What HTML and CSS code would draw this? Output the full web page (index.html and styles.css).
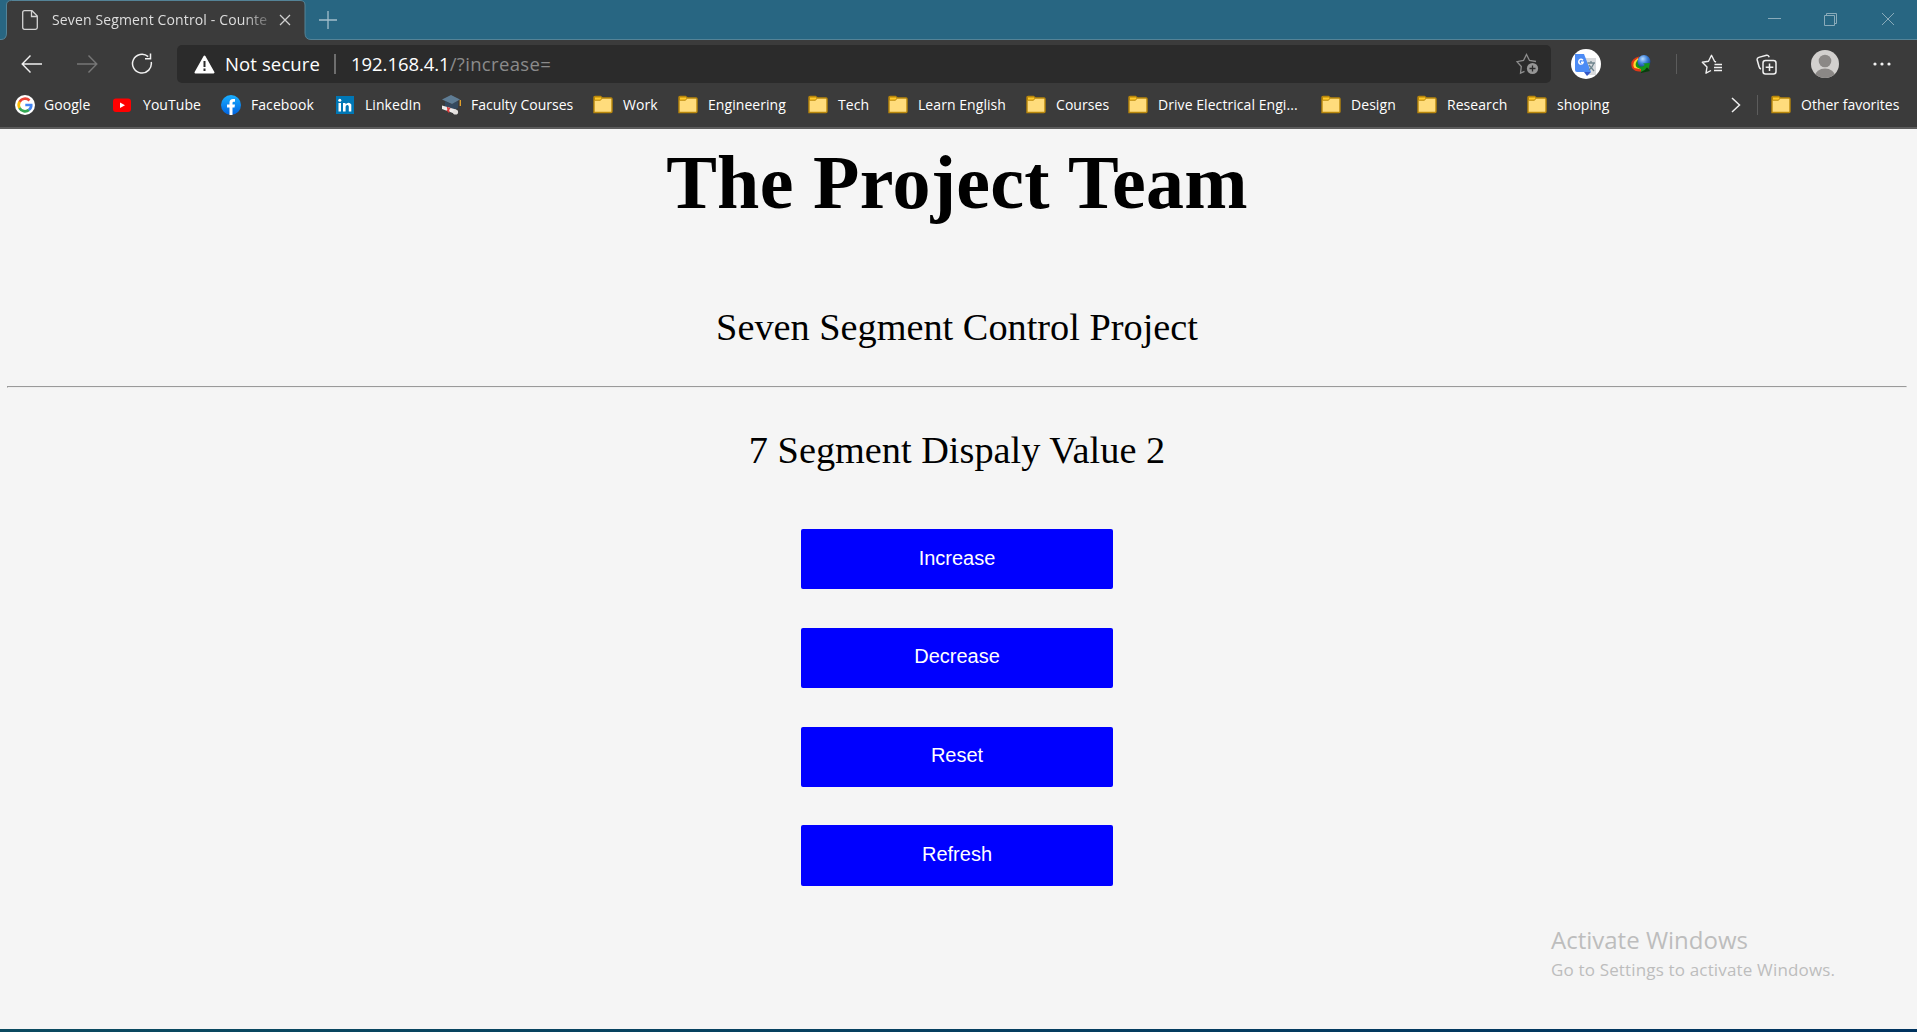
FILE: index.html
```html
<!DOCTYPE html>
<html lang="en">
<head>
<meta charset="utf-8">
<title>Seven Segment Control - Counter</title>
<link rel="stylesheet" href="styles.css">
</head>
<body>
<svg class="defs" width="0" height="0" aria-hidden="true">
  <linearGradient id="fb" x1="0" y1="0" x2="0" y2="1"><stop offset="0" stop-color="#19afff"/><stop offset="1" stop-color="#0062e0"/></linearGradient>
  <radialGradient id="globe" cx=".4" cy=".3" r=".7"><stop offset="0" stop-color="#b9dcff"/><stop offset=".5" stop-color="#3f83dc"/><stop offset="1" stop-color="#123a86"/></radialGradient>
  <symbol id="folder" viewBox="0 0 20 20">
    <path d="M1 17.5V2.5Q1 1.5 2 1.5H7.5L9.5 3H18Q19 3 19 4V16.500Q19 17.500 18 17.500Z" fill="#ffdc7c" stroke="#b8860b" stroke-width="1.4"/>
    <path d="M1.500 2H7.500L9 3.200L7.500 5.200H1.500Z" fill="#ffc928" stroke="#b8860b"/>
  </symbol>
</svg>
<header class="browser">
  <div class="titlebar">
    <div class="tab">
      <svg class="tab-shape" width="320" height="40"><path d="M0 39.500H1Q6.500 39.500 6.500 33V5Q6.500 .5 11.500 .5H300Q305 .5 305 5V33Q305 39.500 311 39.500H320V40H0Z" fill="#3b3b3b"/><path d="M0 39.500H1Q6.500 39.500 6.500 33V5Q6.500 .5 11.500 .5H300Q305 .5 305 5V33Q305 39.500 311 39.500H320" fill="none" stroke="#548397"/></svg>
      <svg class="tab-page" width="16" height="20" fill="none" stroke="#d4d4d4" stroke-width="1.300"><path d="M2.500.7H10L15.300 6V17.500Q15.300 19.300 13.500 19.300H2.500Q.7 19.300.7 17.500V2.500Q.7.7 2.500.7ZM9.500.7V6.500H15.300"/></svg>
      <span class="tab-title">Seven Segment Control - Counte</span>
      <svg class="tab-close" width="12" height="12" stroke="#d0d0d0" stroke-width="1.300"><path d="M1 1L11 11M11 1L1 11"/></svg>
    </div>
    <svg class="plus" width="18" height="18" stroke="#a3bfcc" stroke-width="1.300"><path d="M9 0V18M0 9H18"/></svg>
    <svg class="window-buttons" width="130" height="16" fill="none" stroke="#8aabba"><path d="M1 6.500H14M57.500 3.500H67.500V13.500H57.500ZM59.500 3.500V1.500H69.500V11.500H67.500M115 1L127 13M127 1L115 13"/></svg>
  </div>
  <div class="toolbar">
    <svg class="back" width="22" height="20" fill="none" stroke="#f0f0f0" stroke-width="1.400"><path d="M9.500 1.500L1.200 10L9.500 18.500M1 10H21"/></svg>
    <svg class="forward" width="22" height="20" fill="none" stroke="#777" stroke-width="1.400"><path d="M11.500 1.500L19.800 10L11.500 18.500M0 10H20"/></svg>
    <svg class="reload" width="22" height="22" fill="none" stroke="#f0f0f0" stroke-width="1.500"><path d="M17.200 3.600A9.400 9.400 0 1 0 20.200 9M19.500.5V5.700H14"/></svg>
    <div class="address">
      <svg width="21" height="19"><path d="M10.500 1.500L19.500 17.500H1.500Z" fill="#fff" stroke="#fff" stroke-width="2" stroke-linejoin="round"/><path d="M10.500 6V12M10.500 13.500V16" stroke="#2b2b2b" stroke-width="2"/></svg>
      <span class="secure">Not secure</span>
      <i class="address-line"></i>
      <span class="url">192.168.4.1<span class="path">/?increase=</span></span>
      <svg class="add-star" width="24" height="22" fill="none" stroke="#8d8d8d" stroke-width="1.300"><path d="M8.500 18.300L4.500 20.200L5.300 13.500L1 8.700L7.500 7.500L10.500 1.500L13.500 7.500L20 8.500"/><circle cx="16.500" cy="15.500" r="5.600" fill="#969696" stroke="none"/><path d="M16.500 12.500V18.500M13.500 15.500H19.500" stroke="#2b2b2b"/></svg>
    </div>
    <svg class="translate" width="32" height="32"><circle cx="16" cy="16" r="15" fill="#fff"/><path d="M13 10H26V27H18Z" fill="#d8dadd"/><path d="M5 6H14L21 24H7Q5 24 5 22Z" fill="#4c8bf5"/><path d="M14 24H21L17 28Z" fill="#3457c6"/><path d="M17.500 15H25M21 13V15M24 15Q22 20 19 22M19 17L24 23" fill="none" stroke="#70868e" stroke-width="1.300"/><path d="M13 12.300Q11 10.300 9.200 12.200Q8 14.500 10 16Q12.800 16.500 13.200 14.300H11" fill="none" stroke="#fff" stroke-width="1.400"/></svg>
    <svg class="idm" width="22" height="20"><path d="M9 2.500Q-1 5 2 14Q6 19 13 17L10 12Q5 13 8 7Z" fill="#e23816"/><path d="M8 4Q1 9 4.500 14L12 15.500L9 10Z" fill="#ffd62e"/><path d="M7.500 6Q3.500 12 8 14L12 13L9 8Z" fill="#14961b"/><circle cx="14" cy="7.500" r="6.500" fill="url(#globe)"/><path d="M8 12Q12 14 15 11L13 9.500L20 9L18.500 15L17 13.500Q15 17 11 18V15Q8 15 8 12Z" fill="#14961b"/><path d="M11 18Q15 17 17 13.500L20 17L11 19Z" fill="#073f0b"/></svg>
    <i class="tool-line"></i>
    <svg class="favorites" width="22" height="21" fill="none" stroke="#f0f0f0" stroke-width="1.400" stroke-linejoin="round"><path d="M10 16.500L5 19.200L6 13L1.300 8.300L7.500 7.300L10.500 1.300L13.500 7.300L15 8M13.500 10.500H21M13 13.500H21M13 16.500H21"/></svg>
    <svg class="collections" width="22" height="21" fill="none" stroke="#f0f0f0" stroke-width="1.500"><rect x="7" y="6.500" width="13" height="13.500" rx="2.500"/><path d="M13.500 9.500V17M9.700 13.200H17.300M5 15Q3.500 14.500 3 12.500L1.200 6Q.8 4 2.800 3.400L10.500 1.300Q12.500.8 13.200 3.200"/></svg>
    <svg class="profile" width="28" height="28"><defs><clipPath id="face"><circle cx="14" cy="14" r="14"/></clipPath></defs><g clip-path="url(#face)"><path d="M0 0H28V28H0Z" fill="#d2d0ce"/><circle cx="14" cy="11" r="6.300" fill="#8b8886"/><ellipse cx="14" cy="26" rx="10" ry="7.500" fill="#8b8886"/></g></svg>
    <svg class="more" width="18" height="4" fill="#f2f2f2"><circle cx="2" cy="2" r="1.600"/><circle cx="9" cy="2" r="1.600"/><circle cx="16" cy="2" r="1.600"/></svg>
  </div>
  <nav class="bookmarks">
    <a class="bm google"><svg width="20" height="20"><circle cx="10" cy="10" r="10" fill="#fff"/><g fill="none" stroke-width="2.700"><path d="M14.500 5.500A6.300 6.300 0 0 0 4.500 7" stroke="#ea4335"/><path d="M4.600 6.800A6.300 6.300 0 0 0 4.600 13.200" stroke="#fbbc05"/><path d="M4.500 13A6.300 6.300 0 0 0 14 14.900" stroke="#34a853"/><path d="M13.800 15Q16.500 13 16.200 10H10.300" stroke="#4285f4"/></g></svg><span>Google</span></a>
    <a class="bm youtube"><svg width="20" height="20"><rect x="0" y="3.500" width="18" height="13.500" rx="3" fill="#f00"/><path d="M7 7.500L12 10.200L7 13Z" fill="#fff"/></svg><span>YouTube</span></a>
    <a class="bm facebook"><svg width="20" height="20"><circle cx="10" cy="10" r="10" fill="url(#fb)"/><path d="M8.500 20V12.500H6V9.500H8.500V7.500Q8.500 4 12 4H14V6.700H12.700Q11.500 6.700 11.500 8V9.500H14L13.500 12.500H11.500V20Z" fill="#fff"/></svg><span>Facebook</span></a>
    <a class="bm linkedin"><svg width="20" height="20"><path d="M1 1H19V19H1Z" fill="#0077b5"/><path d="M3.500 8H6V16.500H3.500ZM8 8H10.500V9.200Q14 6 16.300 9.500V16.500H13.800V11.500Q13.500 9.500 12 10Q10.600 10.300 10.600 12V16.500H8Z" fill="#fff"/><circle cx="4.800" cy="5.200" r="1.500" fill="#fff"/></svg><span>LinkedIn</span></a>
    <a class="bm faculty"><svg width="20" height="20"><path d="M4 6L10 9L17 6V13Q10 16 4 12Z" fill="#34495e"/><path d="M1 4.500L10 0L19 4.500L11 9Z" fill="#5f7d95"/><path d="M19.300 5V11" stroke="#e9a52b" stroke-width="1.300"/><path d="M1 10.500L15 14.500L14.500 19L1 14Z" fill="#eeeceb"/><path d="M6.500 12L8 17.500M9 13L6 16" stroke="#df3b3b" stroke-width="1.500"/><circle cx="14.500" cy="17" r="2.600" fill="#e4e0de"/></svg><span>Faculty Courses</span></a>
    <a class="bm work"><svg width="20" height="20"><use href="#folder"/></svg><span>Work</span></a>
    <a class="bm engineering"><svg width="20" height="20"><use href="#folder"/></svg><span>Engineering</span></a>
    <a class="bm tech"><svg width="20" height="20"><use href="#folder"/></svg><span>Tech</span></a>
    <a class="bm english"><svg width="20" height="20"><use href="#folder"/></svg><span>Learn English</span></a>
    <a class="bm courses"><svg width="20" height="20"><use href="#folder"/></svg><span>Courses</span></a>
    <a class="bm drive"><svg width="20" height="20"><use href="#folder"/></svg><span>Drive Electrical Engi...</span></a>
    <a class="bm design"><svg width="20" height="20"><use href="#folder"/></svg><span>Design</span></a>
    <a class="bm research"><svg width="20" height="20"><use href="#folder"/></svg><span>Research</span></a>
    <a class="bm shoping"><svg width="20" height="20"><use href="#folder"/></svg><span>shoping</span></a>
    <svg class="chevron" width="10" height="16" fill="none" stroke="#eee" stroke-width="1.500"><path d="M1 1L8.500 8L1 15"/></svg>
    <i class="bm-line"></i>
    <a class="bm other"><svg width="20" height="20"><use href="#folder"/></svg><span>Other favorites</span></a>
  </nav>
</header>
<main class="page">
  <h1>The Project Team</h1>
  <p class="subtitle">Seven Segment Control Project</p>
  <hr>
  <p class="value">7 Segment Dispaly Value 2</p>
  <form class="controls">
    <button type="button">Increase</button>
    <button type="button">Decrease</button>
    <button type="button">Reset</button>
    <button type="button">Refresh</button>
  </form>
</main>
<aside class="activate"><div class="activate-title">Activate Windows</div><div class="activate-text">Go to Settings to activate Windows.</div></aside>
<footer class="taskbar"></footer>
</body>
</html>
```
FILE: styles.css
```css
* { box-sizing: border-box; }
body { margin: 0; height: 1032px; overflow: hidden; display: flex; flex-direction: column; background: #f5f5f5; font-family: "Open Sans", "Noto Sans", sans-serif; }
svg, i { display: block; flex: none; }
.defs { position: absolute; }
.browser { height: 129px; flex: none; background: #3b3b3b; border-bottom: 2px solid #5c5c5c; color: #fff; }
.titlebar { height: 40px; display: flex; align-items: center; background: #286682; border-bottom: 1px solid #548397; }
.tab { position: relative; width: 320px; height: 40px; flex: none; display: flex; align-items: center; padding-left: 22px; }
.tab-shape { position: absolute; left: 0; top: 0; }
.tab-page, .tab-title, .tab-close { position: relative; }
.tab-title { width: 217px; margin-left: 14px; font-size: 14px; letter-spacing: .13px; line-height: 20px; white-space: nowrap; color: #dedede; -webkit-mask-image: linear-gradient(90deg, #000 88%, transparent 104%); mask-image: linear-gradient(90deg, #000 88%, transparent 104%); }
.tab-close { margin-left: 10px; }
.plus { margin-left: -1px; }
.window-buttons { margin: 0 20px 0 auto; }
.toolbar { height: 48px; display: flex; align-items: center; }
.back { margin-left: 21px; }
.forward { margin-left: 34px; }
.reload { margin-left: 32px; }
.address { width: 1374px; height: 38px; margin-left: 24px; padding: 0 11px 0 17px; display: flex; align-items: center; border-radius: 5px; background: #2b2b2b; font-size: 18.500px; line-height: 24px; white-space: nowrap; }
.secure { width: 98px; margin-left: 10px; letter-spacing: .12px; }
.address-line { width: 2px; height: 20px; margin-left: 11px; background: #6e6e6e; }
.url { margin-left: 15px; letter-spacing: -.05px; }
.path { color: #8b8b8b; letter-spacing: .35px; }
.add-star { margin-left: auto; }
.translate { margin-left: 19px; }
.idm { margin-left: 28px; }
.tool-line { width: 1px; height: 20px; margin-left: 24px; background: #5c5c5c; }
.favorites { margin-left: 24px; }
.collections { margin-left: 33px; }
.profile { margin-left: 33px; }
.more { margin-left: 34px; }
.bookmarks { height: 34px; display: flex; align-items: center; padding-left: 15px; font-size: 14px; letter-spacing: .06px; line-height: 20px; }
.bm { display: flex; flex: none; gap: 10px; white-space: nowrap; }
.google { width: 98px; gap: 9px; }
.youtube { width: 108px; }
.facebook { width: 114px; }
.linkedin { width: 106px; }
.faculty { width: 152px; letter-spacing: 0; }
.work { width: 85px; }
.engineering { width: 130px; }
.tech { width: 80px; }
.english { width: 138px; }
.courses { width: 102px; }
.drive { width: 193px; }
.design { width: 96px; }
.research { width: 110px; }
.shoping { width: 204px; }
.bm-line { width: 1px; height: 20px; margin: 0 13px 0 16px; background: #5c5c5c; }
.other { letter-spacing: 0; }
.page { flex: 1; padding: 11px 10px 0 7px; display: flex; flex-direction: column; font-family: "Liberation Serif", serif; color: #000; text-align: center; }
h1 { margin: 0; font-size: 76px; letter-spacing: .3px; line-height: 84px; }
p { margin: 0; font-size: 38.300px; line-height: 42px; white-space: nowrap; }
.subtitle { margin-top: 82px; }
hr { width: 100%; margin: 38px 0 0; border: 1px inset #eee; }
.value { margin-top: 41px; }
.controls { display: flex; flex-direction: column; align-items: center; gap: 38.500px; margin-top: 58px; }
button { width: 312px; height: 60.300px; padding: 0 0 2px; border: 0; border-radius: 2px; background: #00f; color: #fff; font: 20px "Liberation Sans", sans-serif; }
.activate { position: absolute; left: 1551px; top: 922px; color: #bdbdbd; white-space: nowrap; }
.activate-title { font-size: 24px; line-height: 36px; }
.activate-text { font-size: 17px; letter-spacing: .16px; line-height: 24px; }
.taskbar { height: 3px; flex: none; background: linear-gradient(90deg, #0b4a60, #00335f); }
```
